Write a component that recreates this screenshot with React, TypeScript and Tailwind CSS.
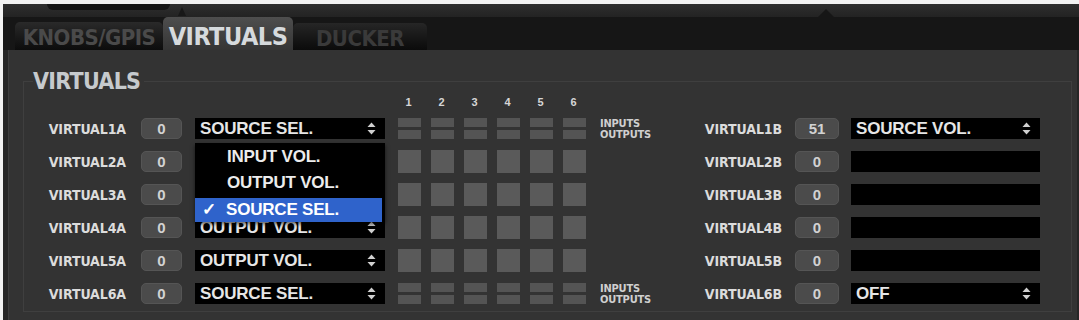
import React from 'react';

const COND = { fontFamily: '"Liberation Sans Narrow", "DejaVu Sans Condensed", "Liberation Sans", Arial, sans-serif' };

interface RowData {
  left: string;
  leftVal: string;
  leftSel: string;
  right: string;
  rightVal: string;
  rightSel: string;
  rightArrows: boolean;
}

// rows 2A/3A sit under the open menu, so their select text is not drawn
const ROWS: RowData[] = [
  { left: 'VIRTUAL1A', leftVal: '0', leftSel: 'SOURCE SEL.', right: 'VIRTUAL1B', rightVal: '51', rightSel: 'SOURCE VOL.', rightArrows: true },
  { left: 'VIRTUAL2A', leftVal: '0', leftSel: '', right: 'VIRTUAL2B', rightVal: '0', rightSel: '', rightArrows: false },
  { left: 'VIRTUAL3A', leftVal: '0', leftSel: '', right: 'VIRTUAL3B', rightVal: '0', rightSel: '', rightArrows: false },
  { left: 'VIRTUAL4A', leftVal: '0', leftSel: 'OUTPUT VOL.', right: 'VIRTUAL4B', rightVal: '0', rightSel: '', rightArrows: false },
  { left: 'VIRTUAL5A', leftVal: '0', leftSel: 'OUTPUT VOL.', right: 'VIRTUAL5B', rightVal: '0', rightSel: '', rightArrows: false },
  { left: 'VIRTUAL6A', leftVal: '0', leftSel: 'SOURCE SEL.', right: 'VIRTUAL6B', rightVal: '0', rightSel: 'OFF', rightArrows: true },
];

const Arrows = () => (
  <svg width="9" height="13" viewBox="0 0 9 13" className="shrink-0">
    <path d="M4.5 0.5 L8.5 5 L0.5 5 Z" fill="#d0d0d0" />
    <path d="M4.5 12.5 L8.5 8 L0.5 8 Z" fill="#d0d0d0" />
  </svg>
);

const Select = ({ text, arrows, width }: { text: string; arrows: boolean; width: string }) => (
  <div className={`${width} h-[21px] bg-black flex items-center justify-between pl-[5px] pr-[9px] overflow-hidden`}>
    <span className="text-[17px] font-bold text-[#e6e6e6] leading-none tracking-[-0.2px]">{text}</span>
    {arrows && <Arrows />}
  </div>
);

const ValueBox = ({ v, w }: { v: string; w: string }) => (
  <div className={`${w} h-[21px] rounded-[5px] bg-[#4b4b4b] border border-[#555] flex items-center justify-center text-[15px] font-bold text-[#d2d2d2] leading-none`}>
    {v}
  </div>
);

const Label = ({ t }: { t: string }) => (
  <div className="w-[80px] text-right text-[14px] font-bold text-[#dcdcdc] leading-none tracking-[-0.1px]" style={COND}>
    {t}
  </div>
);

const IoLabel = () => (
  <div className="flex flex-col text-[11px] font-bold text-[#cfcfcf] leading-[11px] tracking-[-0.2px]" style={COND}>
    <span>INPUTS</span>
    <span>OUTPUTS</span>
  </div>
);

const Matrix = ({ split }: { split: boolean }) => (
  <div className="flex gap-[10px]">
    {[0, 1, 2, 3, 4, 5].map((i) =>
      split ? (
        <div key={i} className="w-[23px] h-[21px] flex flex-col justify-between">
          <div className="h-[9px] bg-[#545454]" />
          <div className="h-[9px] bg-[#545454]" />
        </div>
      ) : (
        <div key={i} className="w-[23px] h-[23px] -my-[1px] bg-[#5a5a5a]" />
      )
    )}
  </div>
);

const Menu = () => (
  <div className="absolute left-0 top-[25px] w-[190px] bg-black z-10 pt-[1px] shadow-[0_2px_4px_rgba(0,0,0,0.6)]">
    <div className="h-[26px] flex items-center pl-[32px] text-[17px] font-bold text-[#ececec] tracking-[-0.2px]">INPUT VOL.</div>
    <div className="h-[26px] flex items-center pl-[32px] text-[17px] font-bold text-[#ececec] tracking-[-0.2px]">OUTPUT VOL.</div>
    <div className="h-[24px] mt-[2px] mr-[3px] flex items-center bg-[#2f63cb] text-[17px] font-bold text-white tracking-[-0.2px]">
      <span className="w-[31px] pl-[7px] text-[17px]">✓</span>
      <span>SOURCE SEL.</span>
    </div>
  </div>
);

export default function App() {
  return (
    <div className="w-[1079px] h-[320px] bg-[#f2f2f2] overflow-hidden pt-[4px] pl-[3px]" style={{ fontFamily: '"Liberation Sans", Arial, sans-serif' }}>
      <div className="h-full bg-[#262626] flex flex-col">
        {/* top trim */}
        <div className="h-[13px] flex items-start bg-gradient-to-b from-[#2e2e2e] to-[#232323]">
          <div className="ml-[44px] w-[123px] h-[6px] rounded-b-[6px] bg-[#141414]" />
          <div className="ml-[8px] w-0 h-0 border-l-[4px] border-r-[4px] border-b-[9px] border-l-transparent border-r-transparent border-b-[#181818] mt-[3px]" />
          <div className="ml-[632px] w-0 h-0 border-l-[8px] border-r-[8px] border-b-[8px] border-l-transparent border-r-transparent border-b-[#161616] mt-[5px]" />
        </div>
        {/* tab strip */}
        <div className="h-[33px] bg-[#161616] flex items-end pl-[12px]" style={COND}>
          <div className="w-[148px] h-[28px] pt-[3px] rounded-t-[5px] bg-gradient-to-b from-[#2a2a2a] to-[#0c0c0c] flex items-center justify-center text-[22px] font-bold text-[#4a4a4a] tracking-[-0.5px]">
            KNOBS/GPIS
          </div>
          <div className="w-[130px] h-[33px] pt-[6px] rounded-t-[5px] bg-gradient-to-b from-[#4e4e4e] to-[#353535] flex items-center justify-center text-[25px] font-bold text-[#d6dadd] tracking-[-0.5px]">
            VIRTUALS
          </div>
          <div className="w-[134px] h-[27px] pt-[3px] rounded-t-[5px] bg-gradient-to-b from-[#262626] to-[#0b0b0b] flex items-center justify-center text-[22px] font-bold text-[#3a3a3a] tracking-[-0.5px]">
            DUCKER
          </div>
        </div>
        {/* panel */}
        <div className="flex-1 ml-[5px] mr-[2px] bg-[#333333] border-l border-[#3e3e3e] pt-[20px] pl-[14px] pr-[5px]">
          <fieldset className="border border-[#3f3f3f] h-[242px]">
            <legend className="ml-[9px] text-[23px] font-bold text-[#c6cacd] leading-none tracking-[-0.7px] pr-1" style={COND}>
              VIRTUALS
            </legend>
            <div className="pl-[22px]">
              {/* column numbers */}
              <div className="flex h-[20px] items-end pb-[5px] ml-[351px] gap-[10px]">
                {[1, 2, 3, 4, 5, 6].map((n) => (
                  <div key={n} className="w-[23px] text-center text-[11px] font-bold text-[#d6d6d6] leading-none">
                    {n}
                  </div>
                ))}
              </div>
              <div className="flex flex-col gap-[12px] mt-[5px]">
                {ROWS.map((r, i) => (
                  <div key={r.left} className="flex items-center h-[21px]">
                    <Label t={r.left} />
                    <div className="ml-[15px]"><ValueBox v={r.leftVal} w="w-[41px]" /></div>
                    <div className="ml-[13px] relative">
                      <Select text={r.leftSel} arrows width="w-[190px]" />
                      {i === 0 && <Menu />}
                    </div>
                    <div className="ml-[13px]"><Matrix split={i === 0 || i === 5} /></div>
                    <div className="ml-[14px] w-[102px]">{(i === 0 || i === 5) && <IoLabel />}</div>
                    <Label t={r.right} />
                    <div className="ml-[13px]"><ValueBox v={r.rightVal} w="w-[44px]" /></div>
                    <div className="ml-[12px]">
                      <Select text={r.rightSel} arrows={r.rightArrows} width="w-[189px]" />
                    </div>
                  </div>
                ))}
              </div>
            </div>
          </fieldset>
        </div>
      </div>
    </div>
  );
}
